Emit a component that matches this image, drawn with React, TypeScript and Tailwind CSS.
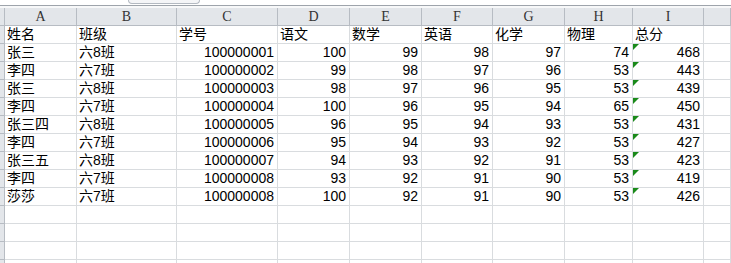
import React from "react";

const cols = ["", "A", "B", "C", "D", "E", "F", "G", "H", "I", ""];

type Row = [string, string, string, number, number, number, number, number, number];

const rows: Row[] = [
  ["张三", "六8班", "100000001", 100, 99, 98, 97, 74, 468],
  ["李四", "六7班", "100000002", 99, 98, 97, 96, 53, 443],
  ["张三", "六8班", "100000003", 98, 97, 96, 95, 53, 439],
  ["李四", "六7班", "100000004", 100, 96, 95, 94, 65, 450],
  ["张三四", "六8班", "100000005", 96, 95, 94, 93, 53, 431],
  ["李四", "六7班", "100000006", 95, 94, 93, 92, 53, 427],
  ["张三五", "六8班", "100000007", 94, 93, 92, 91, 53, 423],
  ["李四", "六7班", "100000008", 93, 92, 91, 90, 53, 419],
  ["莎莎", "六7班", "100000008", 100, 92, 91, 90, 53, 426],
];

const head = ["姓名", "班级", "学号", "语文", "数学", "英语", "化学", "物理", "总分"];

const grid =
  "grid grid-cols-[5px_72px_100px_101px_72px_72px_71px_72px_68px_71px_1fr]";

function Cell({ children, right, flag }: { children?: React.ReactNode; right?: boolean; flag?: boolean }) {
  return (
    <div
      className={`relative h-[18px] border-r border-b border-[#d9dcdf] flex items-end pb-[1px] overflow-hidden whitespace-nowrap ${
        right ? "justify-end pr-[3px]" : "pl-[2px]"
      }`}
    >
      {flag && (
        <span className="absolute left-0 top-0 w-0 h-0 border-t-[6px] border-r-[6px] border-t-[#1a8a1a] border-r-transparent" />
      )}
      <span className="leading-[16px]">{children}</span>
    </div>
  );
}

export default function App() {
  return (
    <div
      className="w-[731px] h-[263px] overflow-hidden bg-white text-black text-[14px]"
      style={{ fontFamily: '"Liberation Sans", "Noto Sans CJK SC", sans-serif' }}
    >
      {/* formula bar remnant */}
      <div className="h-[5px] flex items-start overflow-hidden">
        <span className="ml-[28px] -mt-[13px] font-bold text-[15px] leading-[16px] w-[100px]">255</span>
        <div className="h-[4px] w-[72px] border-l border-r border-b border-[#b3b9c1] rounded-b-[6px] bg-[#f4f5f7]" />
      </div>
      <div className="h-[1px] bg-[#9ea4ab]" />
      <div className="h-[2px] bg-[#f7f8f9]" />

      {/* column headers */}
      <div className={`${grid} bg-[#e3e6ea]`}>
        {cols.map((c, i) => (
          <div
            key={i}
            className="h-[18px] border-r border-b border-[#b7bcc3] flex items-center justify-center text-[14px] text-[#333]"
            style={{ fontFamily: '"Liberation Serif", serif' }}
          >
            {c}
          </div>
        ))}
      </div>

      <div className={grid}>
        {/* header row */}
        <div className="h-[18px] border-r border-b border-[#b7bcc3] bg-[#e3e6ea]" />
        {head.map((h) => (
          <Cell key={h}>{h}</Cell>
        ))}
        <Cell />

        {rows.map((r, i) => (
          <React.Fragment key={i}>
            <div className="h-[18px] border-r border-b border-[#b7bcc3] bg-[#e3e6ea]" />
            <Cell>{r[0]}</Cell>
            <Cell>{r[1]}</Cell>
            <Cell right>{r[2]}</Cell>
            <Cell right>{r[3]}</Cell>
            <Cell right>{r[4]}</Cell>
            <Cell right>{r[5]}</Cell>
            <Cell right>{r[6]}</Cell>
            <Cell right>{r[7]}</Cell>
            <Cell right flag>{r[8]}</Cell>
            <Cell />
          </React.Fragment>
        ))}

        {[0, 1, 2, 3].map((i) => (
          <React.Fragment key={"e" + i}>
            <div className="h-[18px] border-r border-b border-[#b7bcc3] bg-[#e3e6ea]" />
            {Array.from({ length: 10 }).map((_, j) => (
              <Cell key={j} />
            ))}
          </React.Fragment>
        ))}
      </div>
    </div>
  );
}
